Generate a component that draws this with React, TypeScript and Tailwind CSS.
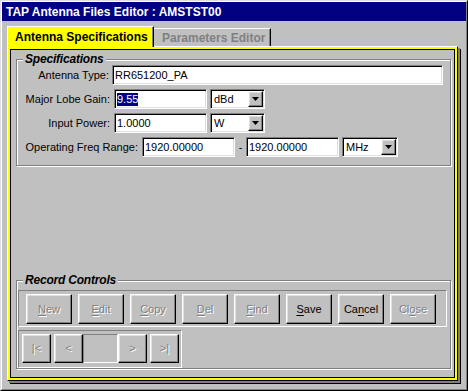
import type { ReactNode } from "react";

const raised =
  "border border-t-white border-l-white border-r-black border-b-black shadow-[inset_-1px_-1px_0_#808080,inset_1px_1px_0_#dfdfdf]";
const sunken =
  "border border-t-[#808080] border-l-[#808080] border-r-white border-b-white shadow-[inset_1px_1px_0_#000,inset_-1px_-1px_0_#dfdfdf]";
const thinSunken = "border border-t-[#808080] border-l-[#808080] border-r-white border-b-white";

const GroupBox = ({ title, className, children }: { title: string; className: string; children: ReactNode }) => (
  <div className={`relative border border-[#808080] shadow-[inset_1px_1px_0_#fff,1px_1px_0_#fff] ${className}`}>
    <span className="absolute -top-[8px] left-[6px] bg-[#c0c0c0] px-[2px] text-[12px] leading-[14px] font-bold italic tracking-[-0.2px] text-black">
      {title}
    </span>
    {children}
  </div>
);

const TextBox = ({ value, width, selected }: { value: string; width: string; selected?: boolean }) => (
  <div className={`flex h-[20px] items-center bg-white pl-[2px] ${sunken} ${width}`}>
    {selected ? (
      <span className="bg-[#000080] leading-[13px] text-white">{value}</span>
    ) : (
      <span className="leading-[13px]">{value}</span>
    )}
  </div>
);

const Arrow = () => (
  <svg width="7" height="4" viewBox="0 0 7 4">
    <path d="M0 0h7L3.5 4z" fill="#000" />
  </svg>
);

const Combo = ({ value, width }: { value: string; width: string }) => (
  <div className={`flex h-[20px] items-center justify-between bg-white pl-[3px] pr-[1px] ${sunken} ${width}`}>
    <span className="leading-[13px]">{value}</span>
    <div className={`flex h-[16px] w-[15px] items-center justify-center bg-[#c0c0c0] ${raised}`}>
      <Arrow />
    </div>
  </div>
);

const Label = ({ text, width }: { text: string; width: string }) => (
  <span className={`text-right ${width}`}>{text}</span>
);

const Button = ({ label, u, disabled }: { label: string; u: number; disabled?: boolean }) => (
  <div
    className={`flex h-[30px] w-[46px] items-center justify-center bg-[#c0c0c0] ${raised} ${
      disabled ? "text-[#808080] [text-shadow:1px_1px_0_#fff]" : "text-black"
    }`}
  >
    {label.slice(0, u)}
    <span className="underline underline-offset-[2px]">{label[u]}</span>
    {label.slice(u + 1)}
  </div>
);

const NavButton = ({ label }: { label: string }) => (
  <div
    className={`flex h-[29px] w-[29px] items-center justify-center bg-[#c0c0c0] text-[#808080] [text-shadow:1px_1px_0_#fff] ${raised}`}
  >
    {label}
  </div>
);

export default function App() {
  return (
    <div className="h-[391px] w-[468px] overflow-hidden bg-[#c0c0c0] font-['Liberation_Sans',Arial,sans-serif] text-[11px] text-black">
      <div className="h-full border border-t-[#dfdfdf] border-l-[#dfdfdf] border-r-black border-b-black">
        <div className="flex h-full flex-col border border-t-white border-l-white border-r-[#808080] border-b-[#808080]">
          <div className="flex h-[19px] items-center bg-[#000080] pl-[4px] text-[12px] font-bold text-white">
            TAP Antenna Files Editor : AMSTST00
          </div>

          <div className="ml-[5px] mt-[5px] flex items-end text-[12px] font-bold">
            <div className="relative z-10 -mb-px flex h-[21px] w-[147px] items-center border-t border-l border-r border-t-white border-l-white border-r-black bg-[#ffff00] pl-[7px] shadow-[inset_-1px_0_0_#808080]">
              Antenna Specifications
            </div>
            <div className="flex h-[18px] w-[117px] items-center border-t border-r border-t-white border-r-black pl-[8px] text-[#808080] shadow-[inset_-1px_0_0_#808080]">
              Parameters Editor
            </div>
          </div>

          <div className="ml-[5px] h-[335px] w-[451px] border border-t-white border-l-white border-r-black border-b-black shadow-[2px_2px_0_#808080,3px_3px_0_#000]">
            <div className="flex h-full flex-col border-2 border-[#ffff00] px-[4px] shadow-[inset_1px_1px_0_#000,inset_-1px_-1px_0_#000]">
              <GroupBox title="Specifications" className="mt-[10px] ml-[2px] w-[435px] pt-[5px] pb-[8px]">
                <div className="flex flex-col gap-[4px]">
                  <div className="flex items-center">
                    <Label text="Antenna Type:" width="w-[92px]" />
                    <div className="ml-[3px]">
                      <TextBox value="RR651200_PA" width="w-[331px]" />
                    </div>
                  </div>
                  <div className="flex items-center">
                    <Label text="Major Lobe Gain:" width="w-[93px]" />
                    <div className="ml-[4px]">
                      <TextBox value="9.55" width="w-[93px]" selected />
                    </div>
                    <div className="ml-[3px]">
                      <Combo value="dBd" width="w-[55px]" />
                    </div>
                  </div>
                  <div className="flex items-center">
                    <Label text="Input Power:" width="w-[93px]" />
                    <div className="ml-[4px]">
                      <TextBox value="1.0000" width="w-[93px]" />
                    </div>
                    <div className="ml-[3px]">
                      <Combo value="W" width="w-[55px]" />
                    </div>
                  </div>
                  <div className="flex items-center">
                    <Label text="Operating Freq Range:" width="w-[121px]" />
                    <div className="ml-[4px]">
                      <TextBox value="1920.00000" width="w-[93px]" />
                    </div>
                    <span className="w-[11px] text-center">-</span>
                    <TextBox value="1920.00000" width="w-[93px]" />
                    <div className="ml-[3px]">
                      <Combo value="MHz" width="w-[56px]" />
                    </div>
                  </div>
                </div>
              </GroupBox>

              <GroupBox title="Record Controls" className="mt-[114px] ml-[2px] w-[435px] pt-[9px] pl-[1px]">
                <div className={`flex h-[37px] w-[429px] gap-[6px] pt-[3px] pl-[7px] ${thinSunken}`}>
                  <Button label="New" u={0} disabled />
                  <Button label="Edit" u={0} disabled />
                  <Button label="Copy" u={0} disabled />
                  <Button label="Del" u={0} disabled />
                  <Button label="Find" u={0} disabled />
                  <Button label="Save" u={0} />
                  <Button label="Cancel" u={2} />
                  <Button label="Close" u={2} disabled />
                </div>
                <div className={`mt-[3px] flex h-[38px] w-[164px] items-start pt-[3px] pl-[3px] ${thinSunken}`}>
                  <NavButton label="|<" />
                  <div className="ml-[3px]">
                    <NavButton label="<" />
                  </div>
                  <div className={`h-[29px] w-[35px] ${thinSunken}`} />
                  <NavButton label=">" />
                  <div className="ml-[3px]">
                    <NavButton label=">|" />
                  </div>
                </div>
              </GroupBox>
            </div>
          </div>
        </div>
      </div>
    </div>
  );
}
